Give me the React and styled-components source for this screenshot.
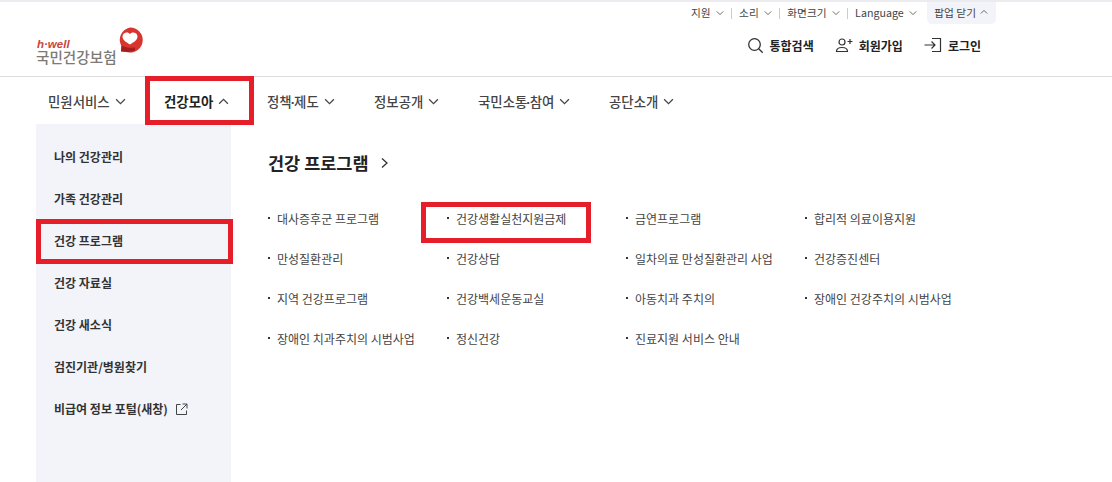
import React from "react";
import styled, { createGlobalStyle } from "styled-components";

const Global = createGlobalStyle`
  html, body { margin: 0; padding: 0; background: #fff; }
  body { font-family: "Noto Sans CJK KR", "Inter", sans-serif; color: #222; overflow: hidden; }
  * { box-sizing: border-box; }
`;

const Page = styled.div`
  width: 1112px;
  height: 482px;
  overflow: hidden;
  border-top: 2px solid #ebebf0;
  display: flex;
  flex-direction: column;
`;
const Header = styled.header`
  height: 75px;
  flex: none;
  border-bottom: 1px solid #dcdcdc;
  padding-left: 36px;
  padding-right: 116px;
  display: flex;
  justify-content: space-between;
`;
const Logo = styled.div`
  position: relative;
  width: 110px;
  margin-top: 25px;
  height: 40px;
`;
const LogoMark = styled.svg`
  position: absolute;
  left: 81px;
  top: 0;
`;
const LogoTop = styled.div`
  position: absolute;
  left: 1px;
  top: 13px;
  font: italic 700 11.5px/8px "Liberation Sans", sans-serif;
  color: #c8453f;
`;
const LogoName = styled.div`
  position: absolute;
  left: 0;
  top: 21px;
  font-size: 14.6px;
  line-height: 18px;
  font-weight: 500;
  color: #7d7975;
  white-space: nowrap;
`;
const HeaderRight = styled.div`
  display: flex;
  flex-direction: column;
  align-items: flex-end;
`;
const Util = styled.div`
  height: 22px;
  display: flex;
  align-items: center;
`;
const UtilItem = styled.span`
  display: flex;
  align-items: center;
  gap: 5px;
  font-size: 10.7px;
  line-height: 20px;
  color: #444;
  padding: 0 7.5px 0 8px;
  white-space: nowrap;
  position: relative;
  & + &::before {
    content: "";
    position: absolute;
    left: 0;
    top: 5px;
    height: 11px;
    width: 1px;
    background: #ccc;
  }
`;
const PopupBtn = styled.span`
  display: flex;
  align-items: center;
  gap: 4px;
  height: 22px;
  margin-left: 3px;
  padding: 0 8px 2px 7px;
  background: #f2f4f9;
  border-radius: 0 0 5px 5px;
  font-size: 10.7px;
  color: #444;
  white-space: nowrap;
`;
const Actions = styled.div`
  display: flex;
  gap: 21px;
  margin-top: 10px;
  padding-right: 15px;
`;
const Action = styled.span`
  display: flex;
  align-items: center;
  gap: 6px;
  font-size: 12px;
  font-weight: 700;
  color: #222;
  height: 22px;
  white-space: nowrap;
`;
const Nav = styled.nav`
  height: 47px;
  flex: none;
  padding-left: 36px;
  display: flex;
  align-items: center;
`;
const NavItem = styled.span`
  position: relative;
  display: flex;
  align-items: center;
  gap: 5px;
  height: 47px;
  padding-top: 1px;
  width: ${(p) => p.$w}px;
  padding-left: ${(p) => p.$pad}px;
  font-size: 13.4px;
  font-weight: ${(p) => (p.$active ? 700 : 500)};
  color: ${(p) => (p.$active ? "#222" : "#444")};
  white-space: nowrap;
`;
const NavLabel = styled.span`
  display: inline;
`;
const MiddleDot = styled.span`
  font-family: "Liberation Sans", sans-serif;
  font-weight: 700;
  margin: 0 -1px;
`;
const Highlight = styled.span`
  position: absolute;
  border: 5px solid #e51e2a;
  pointer-events: none;
`;
const NavHighlight = styled(Highlight)`
  left: 0;
  top: -1px;
  width: 109px;
  height: 49px;
`;
const Main = styled.div`
  flex: 1;
  display: flex;
  padding-left: 36px;
`;
const Side = styled.aside`
  width: 195px;
  flex: none;
  background: #f2f4fa;
  padding: 13px 0 0 18px;
  display: flex;
  flex-direction: column;
`;
const SideItem = styled.div`
  position: relative;
  height: 42px;
  display: flex;
  align-items: center;
  gap: 7px;
  font-size: 12px;
  line-height: 40px;
  padding-bottom: 2px;
  font-weight: 700;
  color: #333;
  white-space: nowrap;
`;
const SideHighlight = styled(Highlight)`
  left: -18px;
  top: -2px;
  width: 197px;
  height: 45px;
`;
const Content = styled.section`
  flex: 1;
  padding: 26px 0 0 37px;
`;
const Title = styled.h2`
  margin: 0;
  height: 26px;
  display: flex;
  align-items: center;
  gap: 11px;
  font-size: 17.5px;
  line-height: 26px;
  font-weight: 700;
  color: #222;
`;
const Grid = styled.ul`
  list-style: none;
  margin: 22px 0 0;
  padding: 0;
  display: grid;
  grid-template-columns: repeat(4, 179px);
  grid-auto-rows: 40px;
`;
const Cell = styled.li`
  position: relative;
  display: flex;
  align-items: center;
  gap: 7px;
  height: 40px;
  font-size: 12px;
  color: #444;
  white-space: nowrap;
  &::before {
    content: "";
    width: 2px;
    height: 2px;
    background: #333;
    flex: none;
  }
`;
const CellHighlight = styled(Highlight)`
  left: -26px;
  top: 4px;
  width: 170px;
  height: 41px;
`;

const Chev = ({ up, size = 8, color = "#555" }) => (
  <svg width={size} height={size} viewBox="0 0 10 10" fill="none" stroke={color} strokeWidth="1.1">
    <path d={up ? "M1 7l4-4 4 4" : "M1 3l4 4 4-4"} />
  </svg>
);

const navItems = [
  { t: ["민원서비스"], w: 109, pad: 12 },
  { t: ["건강모아"], w: 108, pad: 19, active: true },
  { t: ["정책", "제도"], w: 107, pad: 14 },
  { t: ["정보공개"], w: 104, pad: 14 },
  { t: ["국민소통", "참여"], w: 132, pad: 14 },
  { t: ["공단소개"], w: 100, pad: 13 },
];
const sideItems = ["나의 건강관리", "가족 건강관리", "건강 프로그램", "건강 자료실", "건강 새소식", "검진기관/병원찾기"];
const programs = [
  "대사증후군 프로그램", "건강생활실천지원금제", "금연프로그램", "합리적 의료이용지원",
  "만성질환관리", "건강상담", "일차의료 만성질환관리 사업", "건강증진센터",
  "지역 건강프로그램", "건강백세운동교실", "아동치과 주치의", "장애인 건강주치의 시범사업",
  "장애인 치과주치의 시범사업", "정신건강", "진료지원 서비스 안내",
];

export default function App() {
  return (
    <>
      <Global />
      <Page>
        <Header>
          <Logo>
            <LogoMark width="26" height="27" viewBox="0 0 26 27">
              <path d="M13 .5a12.500 12.500 0 1 1-2 24.800l-7-.8.500-5.300A12.500 12.500 0 0 1 13 .500z" fill="#d8352f" />
              <path d="M13 17.500C8.500 15 5.500 12.500 5.500 9.500c0-4 5.500-5.500 7.500-2.500 2-3 7.500-1.500 7.500 2.500 0 3-3 5.500-7.500 8z" fill="#fff" />
              <path d="M4.500 18.500c3 1.700 6 2.300 11 2.300l2.500-.6v3.300l-6.500 1.500-7.500-.8z" fill="#a71c1e" />
            </LogoMark>
            <LogoTop>h·well</LogoTop>
            <LogoName>국민건강보험</LogoName>
          </Logo>
          <HeaderRight>
            <Util>
              <UtilItem>지원 <Chev /></UtilItem>
              <UtilItem>소리 <Chev /></UtilItem>
              <UtilItem>화면크기 <Chev /></UtilItem>
              <UtilItem>Language <Chev /></UtilItem>
              <PopupBtn>팝업 닫기 <Chev up /></PopupBtn>
            </Util>
            <Actions>
              <Action>
                <svg width="17" height="17" viewBox="0 0 17 17" fill="none" stroke="#333" strokeWidth="1.3">
                  <circle cx="7.5" cy="7.5" r="5.800" />
                  <path d="M11.700 11.700l4 4" />
                </svg>
                통합검색
              </Action>
              <Action>
                <svg width="18" height="16" viewBox="0 0 18 16" fill="none" stroke="#333" strokeWidth="1.2">
                  <circle cx="7" cy="5" r="3" />
                  <path d="M1.5 14.500c0-3 2.500-4 5.500-4s5.500 1 5.500 4z" />
                  <path d="M12.500 4.500h5M15 2v5" />
                </svg>
                회원가입
              </Action>
              <Action>
                <svg width="18" height="16" viewBox="0 0 18 16" fill="none" stroke="#333" strokeWidth="1.2">
                  <path d="M.5 8h10M7.500 4.500L11 8l-3.500 3.500" />
                  <path d="M8 1.500h8.500v13H8" />
                </svg>
                로그인
              </Action>
            </Actions>
          </HeaderRight>
        </Header>
        <Nav>
          {navItems.map((n) => (
            <NavItem key={n.t[0]} $w={n.w} $pad={n.pad} $active={n.active}>
              <NavLabel>
                {n.t[0]}
                {n.t[1] && <MiddleDot>·</MiddleDot>}
                {n.t[1]}
              </NavLabel>
              <Chev up={n.active} size={11} color="#444" />
              {n.active && <NavHighlight />}
            </NavItem>
          ))}
        </Nav>
        <Main>
          <Side>
            {sideItems.map((s) => (
              <SideItem key={s}>
                {s}
                {s === "건강 프로그램" && <SideHighlight />}
              </SideItem>
            ))}
            <SideItem>
              비급여 정보 포털(새창)
              <svg width="13" height="13" viewBox="0 0 13 13" fill="none" stroke="#444" strokeWidth="1">
                <path d="M5.500 1.500h-4v10h10v-4M7.500 1h4.500v4.500M12 1L6 7" />
              </svg>
            </SideItem>
          </Side>
          <Content>
            <Title>
              건강 프로그램
              <svg width="10" height="12" viewBox="0 0 10 12" fill="none" stroke="#333" strokeWidth="1.3">
                <path d="M2 1.500L7 6l-5 4.500" />
              </svg>
            </Title>
            <Grid>
              {programs.map((p) => (
                <Cell key={p}>
                  {p}
                  {p === "건강생활실천지원금제" && <CellHighlight />}
                </Cell>
              ))}
            </Grid>
          </Content>
        </Main>
      </Page>
    </>
  );
}
